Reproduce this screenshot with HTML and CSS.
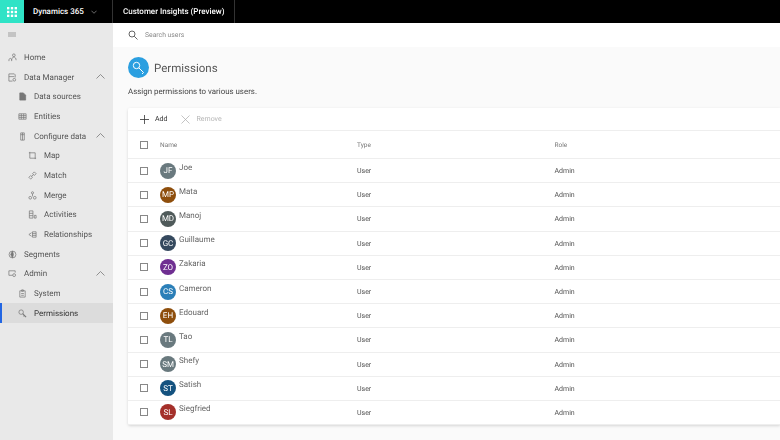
FILE: index.html
```html
<!DOCTYPE html>
<html lang="en">
<head>
  <meta charset="UTF-8" />
  <title>Permissions</title>
  <link rel="stylesheet" href="styles.css">
</head>
<body>

  <!-- TOP BAR -->
  <header class="topbar">
    <div class="waffle">
      <svg width="10" height="10" viewBox="0 0 10 10" fill="#fff">
        <rect x="0" y="0" width="2.4" height="2.4"/><rect x="3.8" y="0" width="2.4" height="2.4"/><rect x="7.6" y="0" width="2.4" height="2.4"/>
        <rect x="0" y="3.8" width="2.4" height="2.4"/><rect x="3.8" y="3.8" width="2.4" height="2.4"/><rect x="7.6" y="3.8" width="2.4" height="2.4"/>
        <rect x="0" y="7.6" width="2.4" height="2.4"/><rect x="3.8" y="7.6" width="2.4" height="2.4"/><rect x="7.6" y="7.6" width="2.4" height="2.4"/>
      </svg>
    </div>
    <div class="brand">
      <span>Dynamics 365</span>
      <svg width="6" height="4" viewBox="0 0 7 4" fill="none" stroke="#9a9a9a" stroke-width="0.8"><path d="M0.5 0.5 3.5 3.5 6.5 0.5"/></svg>
    </div>
    <div class="app">Customer Insights (Preview)</div>
  </header>

  <div class="layout">
    <!-- SIDEBAR -->
    <nav class="sidebar">
      <div class="burger"></div>

      <a class="item"><svg class="ico" viewBox="0 0 10 10"><circle cx="6.5" cy="2.5" r="1.5"/><path d="M4 9c0-3 1-4.500 2.500-4.500S9 6 9 8M1 9c0-2 .5-3 1.500-3S4 7 4 8"/></svg>Home</a>
      <a class="item"><svg class="ico" viewBox="0 0 10 10"><path d="M5 9H1V1h6l1 1v3M1 4h6"/><circle cx="7" cy="7.500" r="1.500"/></svg>Data Manager<svg class="caret" viewBox="0 0 9 5"><path d="M.5 4.500 4.500 .5l4 4"/></svg></a>
      <a class="item sub"><svg class="ico" viewBox="0 0 10 10"><path d="M2 1h4l2.500 2.500V9H2z" fill="#777"/></svg>Data sources</a>
      <a class="item sub"><svg class="ico" viewBox="0 0 10 10"><path d="M1 2h8v6H1zM1 4h8M1 6h8M3.700 2v6M6.300 2v6"/></svg>Entities</a>
      <a class="item sub"><svg class="ico" viewBox="0 0 10 10"><path d="M3 1h4v8H3zM5 1v8M3 3h4"/></svg>Configure data<svg class="caret" viewBox="0 0 9 5"><path d="M.5 4.500 4.500 .5l4 4"/></svg></a>
      <a class="item subsub"><svg class="ico" viewBox="0 0 10 10"><path d="M2 1v7h7M1 2h7v7"/></svg>Map</a>
      <a class="item subsub"><svg class="ico" viewBox="0 0 10 10"><path d="M1 7l2-2 2 2-2 2zM5 3l2-2 2 2-2 2zM4 6l2-2"/></svg>Match</a>
      <a class="item subsub"><svg class="ico" viewBox="0 0 10 10"><circle cx="5" cy="2" r="1.200"/><circle cx="2.500" cy="7.500" r="1.500"/><circle cx="7.500" cy="7.500" r="1.500"/><path d="M5 3.200V6"/></svg>Merge</a>
      <a class="item subsub"><svg class="ico" viewBox="0 0 10 10"><path d="M1.500 1h4v8h-4zM1.500 3.700h4M1.500 6.300h4M7 6h2v3H7z"/></svg>Activities</a>
      <a class="item subsub"><svg class="ico" viewBox="0 0 10 10"><path d="M5 2h4v6H5zM5 4h4M5 6h4M4 3 1 5l3 2"/></svg>Relationships</a>
      <a class="item"><svg class="ico" viewBox="0 0 10 10"><circle cx="5" cy="5" r="3.800"/><path d="M5 1.200 3 5l2 3.800 1-3.800z" fill="#777"/></svg>Segments</a>
      <a class="item"><svg class="ico" viewBox="0 0 10 10"><path d="M5 7H1V2h7v2"/><circle cx="6.800" cy="6.800" r="1.600"/></svg>Admin<svg class="caret" viewBox="0 0 9 5"><path d="M.5 4.500 4.500 .5l4 4"/></svg></a>
      <a class="item sub"><svg class="ico" viewBox="0 0 10 10"><path d="M2 2h6v7H2zM4 1h2v1.500H4zM3.500 5h3M3.500 7h3"/></svg>System</a>
      <a class="item sub active"><svg class="ico" viewBox="0 0 10 10"><circle cx="3.500" cy="3.500" r="2.500"/><path d="M5.200 5.200 9 9M7.200 7.200 6.200 8.200" stroke-width="1.200"/></svg>Permissions</a>
    </nav>

    <!-- CONTENT -->
    <main class="main">
      <div class="search">
        <svg width="10" height="10" viewBox="0 0 10 10" fill="none" stroke="#666" stroke-width="1"><circle cx="4" cy="4" r="3"/><path d="M6.200 6.200 9.500 9.500"/></svg>
        <span>Search users</span>
      </div>

      <div class="page">
        <div class="title">
          <div class="title-icon">
            <svg width="13" height="13" viewBox="0 0 13 13" fill="none" stroke="#fff" stroke-width="1"><circle cx="4.500" cy="4.500" r="3.200"/><path d="M6.800 6.800 11.500 11.500 10 13"/></svg>
          </div>
          <h1>Permissions</h1>
        </div>
        <p class="intro">Assign permissions to various users.</p>

        <section class="card">
          <div class="toolbar">
            <span class="tool">
              <svg width="9" height="9" viewBox="0 0 9 9" stroke="#333" stroke-width="0.8"><path d="M4.500 0v9M0 4.500h9"/></svg>
              Add
            </span>
            <span class="tool off">
              <svg width="9" height="9" viewBox="0 0 9 9" stroke="#aaa" stroke-width="0.7"><path d="M.5 .5l8 8M8.500 .5l-8 8"/></svg>
              Remove
            </span>
          </div>

          <div class="row head">
            <span class="box"></span><span class="name-col">Name</span><span class="type-col">Type</span><span class="role-col">Role</span>
          </div>

          <div class="row"><span class="box"></span><span class="name-col"><i class="avatar grey">JF</i><b>Joe</b></span><span class="type-col">User</span><span class="role-col">Admin</span></div>
          <div class="row"><span class="box"></span><span class="name-col"><i class="avatar brown">MP</i><b>Mata</b></span><span class="type-col">User</span><span class="role-col">Admin</span></div>
          <div class="row"><span class="box"></span><span class="name-col"><i class="avatar dark">MD</i><b>Manoj</b></span><span class="type-col">User</span><span class="role-col">Admin</span></div>
          <div class="row"><span class="box"></span><span class="name-col"><i class="avatar navy">GC</i><b>Guillaume</b></span><span class="type-col">User</span><span class="role-col">Admin</span></div>
          <div class="row"><span class="box"></span><span class="name-col"><i class="avatar purple">ZO</i><b>Zakaria</b></span><span class="type-col">User</span><span class="role-col">Admin</span></div>
          <div class="row"><span class="box"></span><span class="name-col"><i class="avatar blue">CS</i><b>Cameron</b></span><span class="type-col">User</span><span class="role-col">Admin</span></div>
          <div class="row"><span class="box"></span><span class="name-col"><i class="avatar brown">EH</i><b>Edouard</b></span><span class="type-col">User</span><span class="role-col">Admin</span></div>
          <div class="row"><span class="box"></span><span class="name-col"><i class="avatar grey">TL</i><b>Tao</b></span><span class="type-col">User</span><span class="role-col">Admin</span></div>
          <div class="row"><span class="box"></span><span class="name-col"><i class="avatar grey">SM</i><b>Shefy</b></span><span class="type-col">User</span><span class="role-col">Admin</span></div>
          <div class="row"><span class="box"></span><span class="name-col"><i class="avatar teal">ST</i><b>Satish</b></span><span class="type-col">User</span><span class="role-col">Admin</span></div>
          <div class="row"><span class="box"></span><span class="name-col"><i class="avatar red">SL</i><b>Siegfried</b></span><span class="type-col">User</span><span class="role-col">Admin</span></div>
        </section>
      </div>
    </main>
  </div>

</body>
</html>
```

FILE: styles.css
```css
* {
  box-sizing: border-box;
}

html, body {
  height: 100%;
}

html {
  background-color: #fafafa;
}

/* the reference is a soft, scaled-down capture */
body {
  margin: 0;
  overflow: hidden;
  font-family: 'Roboto', 'Open Sans', sans-serif;
  text-rendering: geometricPrecision;
  color: #444;
  filter: blur(0.3px);
}

/* top bar */
.topbar {
  display: flex;
  height: 23px;
  background-color: #000;
  color: #fff;
  font-size: 8px;
  font-weight: 500;
}

.waffle {
  width: 24px;
  background-color: #2fe3c6;
  display: flex;
  align-items: center;
  justify-content: center;
}

.brand {
  width: 89px;
  padding-left: 9px;
  display: flex;
  align-items: center;
  gap: 7px;
  border-right: 1px solid #333;
}

.app {
  padding: 0 10px;
  width: 122px;
  display: flex;
  align-items: center;
  white-space: nowrap;
  border-right: 1px solid #333;
}

.layout {
  display: flex;
  height: 417px;
}

/* sidebar */
.sidebar {
  width: 113px;
  flex-shrink: 0;
  background-color: #e9e9e9;
  padding-top: 9px;
}

.burger {
  width: 8px;
  height: 5px;
  margin: 0 0 10.5px 8px;
  background-color: #c4c4c4;
}

.item {
  position: relative;
  display: flex;
  align-items: center;
  height: 19.7px;
  padding-left: 8px;
  font-size: 8px;
  color: #555;
}

.sub {
  padding-left: 18px;
}

.subsub {
  padding-left: 28px;
}

.ico {
  width: 9px;
  height: 9px;
  margin-right: 7px;
  flex-shrink: 0;
  fill: none;
  stroke: #777;
  stroke-width: 0.8;
}

.caret {
  position: absolute;
  right: 8px;
  top: 7px;
  width: 9px;
  height: 5px;
  fill: none;
  stroke: #777;
  stroke-width: 0.8;
}

.active {
  background-color: #dcdcdc;
  border-left: 2px solid #2266e3;
  padding-left: 16px;
  color: #333;
}

/* main */
.main {
  flex: 1;
  min-width: 0;
  overflow: hidden;
}

.search {
  height: 24px;
  background-color: #fff;
  padding-left: 15px;
  display: flex;
  align-items: center;
  gap: 7px;
  font-size: 6.8px;
  color: #888;
}

.page {
  padding: 10px 0 0 15px;
}

.title {
  display: flex;
  align-items: center;
  gap: 5px;
  height: 21px;
}

.title-icon {
  width: 21px;
  height: 21px;
  border-radius: 50%;
  background-color: #2b9fe0;
  display: flex;
  align-items: center;
  justify-content: center;
}

h1 {
  margin: 0;
  font-size: 11.5px;
  font-weight: 400;
  color: #555;
}

.intro {
  margin: 8px 0 10px;
  height: 12px;
  line-height: 12px;
  font-size: 7.9px;
  color: #444;
}

.card {
  width: 100%;
  background-color: #fff;
  box-shadow: 0 1px 3px rgba(0,0,0,0.15);
  border-radius: 2px 0 0 2px;
}

.toolbar {
  height: 23px;
  padding-left: 12px;
  display: flex;
  align-items: center;
  gap: 14px;
  font-size: 7px;
  color: #333;
  border-bottom: 1px solid #eee;
}

.tool {
  display: flex;
  align-items: center;
  gap: 6px;
}

.off {
  color: #b5b5b5;
}

.row {
  position: relative;
  display: flex;
  align-items: center;
  height: 24.2px;
  font-size: 7px;
  color: #555;
  border-bottom: 1px solid #eee;
}

.head {
  height: 28px;
  color: #777;
  font-size: 6.5px;
}

.box {
  width: 8px;
  height: 8px;
  margin-left: 12px;
  border: 1px solid #888;
  flex-shrink: 0;
}

.name-col {
  width: 197px;
  margin-left: 12px;
  display: flex;
  align-items: center;
  gap: 3px;
}

.type-col {
  width: 197.5px;
  padding-top: 1px;
}

.role-col {
  padding-top: 1px;
}

.avatar {
  width: 16px;
  height: 16px;
  border-radius: 50%;
  display: flex;
  align-items: center;
  justify-content: center;
  color: #fff;
  font-size: 8px;
  font-style: normal;
}

.row b {
  font-weight: 400;
  font-size: 8px;
  color: #666;
  margin-top: -7px;
}

.grey { background-color: #69797e; }
.brown { background-color: #8e4e0c; }
.dark { background-color: #4f5a5a; }
.navy { background-color: #35495e; }
.purple { background-color: #6f2f91; }
.blue { background-color: #2b7fb8; }
.teal { background-color: #14527f; }
.red { background-color: #a4302a; }
```
